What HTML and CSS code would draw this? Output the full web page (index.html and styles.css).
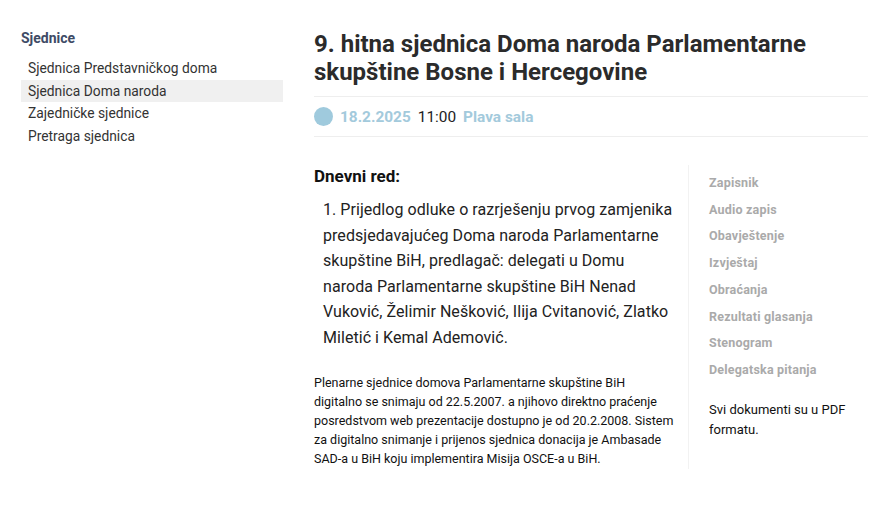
FILE: index.html
```html
<!DOCTYPE html>
<html lang="bs">
<head>
<meta charset="utf-8">
<title>9. hitna sjednica Doma naroda</title>
<link rel="stylesheet" href="styles.css">
</head>
<body>
<div class="page">
  <aside class="sidebar">
    <h3 class="side-title">Sjednice</h3>
    <ul class="side-list">
      <li class="side-item">Sjednica Predstavničkog doma</li>
      <li class="side-item active">Sjednica Doma naroda</li>
      <li class="side-item">Zajedničke sjednice</li>
      <li class="side-item">Pretraga sjednica</li>
    </ul>
  </aside>
  <main class="main">
    <h1 class="title">9. hitna sjednica Doma naroda Parlamentarne skupštine Bosne i Hercegovine</h1>
    <div class="meta">
      <span class="dot"></span>
      <span class="date">18.2.2025</span>
      <span class="time">11:00</span>
      <span class="room">Plava sala</span>
    </div>
    <div class="body">
      <div class="content">
        <h2 class="agenda-title">Dnevni red:</h2>
        <p class="agenda-item">1. Prijedlog odluke o razrješenju prvog zamjenika predsjedavajućeg Doma naroda Parlamentarne skupštine BiH, predlagač: delegati u Domu naroda Parlamentarne skupštine BiH Nenad Vuković, Želimir Nešković, Ilija Cvitanović, Zlatko Miletić i Kemal Ademović.</p>
        <p class="note">Plenarne sjednice domova Parlamentarne skupštine BiH digitalno se snimaju od 22.5.2007. a njihovo direktno praćenje posredstvom web prezentacije dostupno je od 20.2.2008. Sistem za digitalno snimanje i prijenos sjednica donacija je Ambasade SAD-a u BiH koju implementira Misija OSCE-a u BiH.</p>
      </div>
      <div class="docs">
        <ul class="doc-list">
          <li>Zapisnik</li>
          <li>Audio zapis</li>
          <li>Obavještenje</li>
          <li>Izvještaj</li>
          <li>Obraćanja</li>
          <li>Rezultati glasanja</li>
          <li>Stenogram</li>
          <li>Delegatska pitanja</li>
        </ul>
        <p class="doc-note">Svi dokumenti su u PDF formatu.</p>
      </div>
    </div>
  </main>
</div>
</body>
</html>
```

FILE: styles.css
```css
* { box-sizing: border-box; }
html, body { margin: 0; padding: 0; background: #fff; }
body {
  font-family: Roboto, "Liberation Sans", sans-serif;
  color: #222;
}
.page {
  display: grid;
  grid-template-columns: 262px 554px;
  column-gap: 31px;
  padding: 30px 0 0 21px;
}
.side-title {
  margin: 0 0 11px 0;
  font-size: 14px;
  font-weight: 700;
  color: #3e4b66;
  line-height: 16px;
}
.side-list { list-style: none; margin: 0; padding: 0; }
.side-item {
  font-size: 13.8px;
  line-height: 22.5px;
  padding-left: 7px;
  color: #333;
}
.side-item.active { background: #f0f0f0; }

.title {
  margin: 0;
  font-size: 24px;
  line-height: 28px;
  font-weight: 700;
  color: #2b2b2b;
  padding-bottom: 10px;
  border-bottom: 1px solid #eeeeee;
}
.meta {
  display: flex;
  align-items: center;
  gap: 7px;
  height: 40px;
  border-bottom: 1px solid #eeeeee;
  font-size: 15.4px;
}
.dot {
  width: 19px; height: 19px;
  border-radius: 50%;
  background: #9fcadd;
}
.date { font-weight: 700; color: #a3cadc; }
.time { color: #222; }
.room { font-weight: 700; color: #a3cadc; }

.body {
  display: grid;
  grid-template-columns: 374px 1fr;
  margin-top: 28px;
}
.content { padding-right: 14px; }
.agenda-title {
  margin: 0 0 10px 0;
  font-size: 17px;
  line-height: 22px;
  font-weight: 700;
  color: #111;
}
.agenda-item {
  margin: 0 0 22px 0;
  padding-left: 9px;
  font-size: 16px;
  line-height: 25.6px;
  letter-spacing: 0.05px;
  color: #222;
}
.note {
  margin: 0;
  font-size: 12.5px;
  line-height: 19.2px;
  color: #111;
}
.docs {
  border-left: 1px solid #f2f2f2;
  padding-left: 20px;
  padding-top: 5px;
  min-height: 285px;
}
.doc-list { list-style: none; margin: 0; padding: 0; }
.doc-list li {
  font-size: 12.5px;
  line-height: 26.7px;
  font-weight: 700;
  letter-spacing: 0.2px;
  color: #aaaaaa;
}
.doc-note {
  margin: 16px 0 0 0;
  font-size: 13px;
  line-height: 20px;
  color: #111;
}
```
